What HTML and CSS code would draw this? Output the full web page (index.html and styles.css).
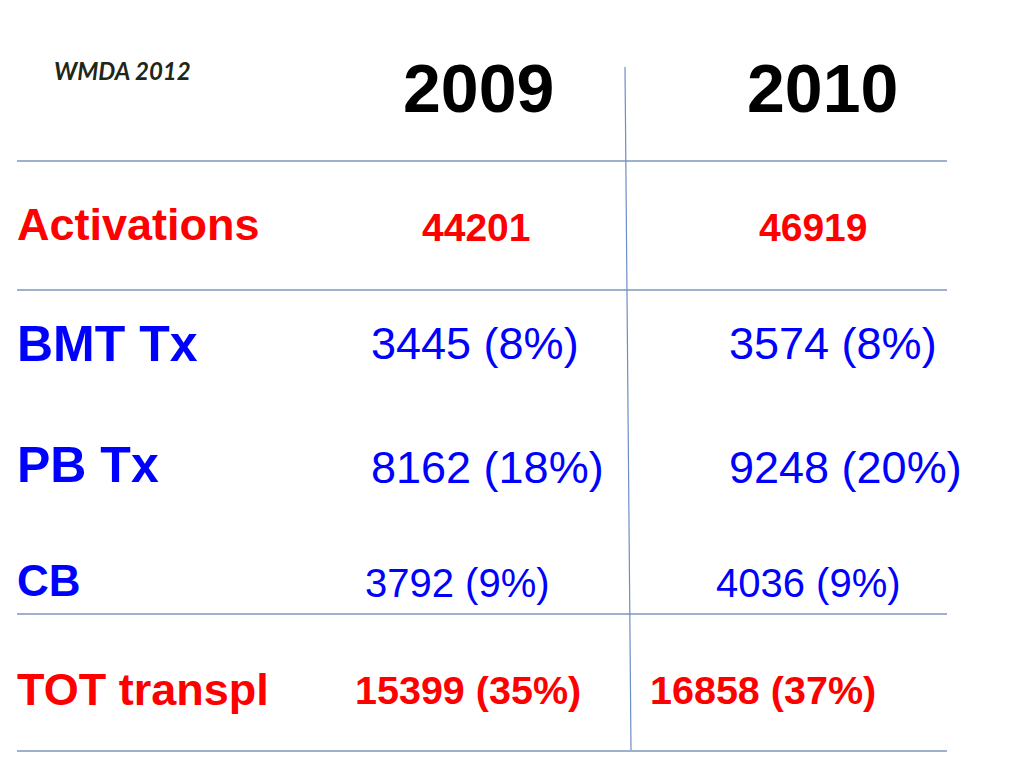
FILE: index.html
```html
<!DOCTYPE html>
<html lang="en">
<head>
<meta charset="utf-8">
<title>WMDA 2012</title>
<link rel="stylesheet" href="styles.css">
</head>
<body>
<div class="slide">
  <div class="table">
    <div class="row head">
      <div class="cell wmda">WMDA 2012</div>
      <div class="cell year y2009">2009</div>
      <div class="cell year y2010">2010</div>
    </div>
    <div class="row act">
      <div class="cell label red lbl-act">Activations</div>
      <div class="cell num-act red a1">44201</div>
      <div class="cell num-act red a2">46919</div>
    </div>
    <div class="block mid">
      <div class="row sub bmt">
        <div class="cell label blue lbl-big">BMT Tx</div>
        <div class="cell val blue v1">3445 (8%)</div>
        <div class="cell val blue v2">3574 (8%)</div>
      </div>
      <div class="row sub pb">
        <div class="cell label blue lbl-big pbl">PB Tx</div>
        <div class="cell val blue v1 pbv">8162 (18%)</div>
        <div class="cell val blue v2 pbv">9248 (20%)</div>
      </div>
      <div class="row sub cb">
        <div class="cell label blue lbl-cb">CB</div>
        <div class="cell val-sm blue c1">3792 (9%)</div>
        <div class="cell val-sm blue c2">4036 (9%)</div>
      </div>
    </div>
    <div class="row tot">
      <div class="cell label red lbl-tot">TOT transpl</div>
      <div class="cell num-tot red t1">15399 (35%)</div>
      <div class="cell num-tot red t2">16858 (37%)</div>
    </div>
  </div>
  <svg class="vline" width="1024" height="768" viewBox="0 0 1024 768" aria-hidden="true">
    <line x1="625" y1="67" x2="631" y2="750" stroke="#6d8ec6" stroke-width="1.2"/>
  </svg>
</div>
</body>
</html>
```

FILE: styles.css
```css
* { box-sizing: border-box; }
html, body { margin: 0; padding: 0; background: #ffffff; }
body { font-family: "Liberation Sans", Arial, sans-serif; }

.slide {
  position: relative;
  width: 1024px;
  height: 768px;
  background: #ffffff;
  overflow: hidden;
}

.table {
  margin-left: 17px;
  width: 930px;
}

.row {
  display: grid;
  grid-template-columns: 335px 276px 319px;
}

.head { height: 162px; border-bottom: 2px solid #9db1cc; }
.act  { height: 129px; border-bottom: 2px solid #9db1cc; }
.mid  { height: 324px; border-bottom: 2px solid #9db1cc; }
.tot  { height: 137px; border-bottom: 2px solid #9db1cc; }

.sub.bmt { height: 120px; }
.sub.pb  { height: 120px; }
.sub.cb  { height: 82px; }

.cell { line-height: 1; white-space: nowrap; }

.red { color: #ff0000; }
.blue { color: #0000ff; }

/* header */
.wmda {
  font-family: Lato, "Open Sans", sans-serif;
  font-weight: 700;
  font-style: italic;
  font-size: 24px;
  color: #1f2719;
  padding: 59px 0 0 37px;
}
.year { font-size: 68px; font-weight: 700; color: #000; padding-top: 54px; }
.y2009 { padding-left: 51px; }
.y2010 { padding-left: 119px; }

/* labels */
.label { font-weight: 700; }
.lbl-act { font-size: 45px; padding-top: 40px; }
.lbl-big { font-size: 50px; padding-top: 28px; }
.pbl { padding-top: 29px; }
.lbl-cb { font-size: 44px; padding-top: 28px; }
.lbl-tot { font-size: 45px; padding-top: 52px; }

/* activations */
.num-act { font-size: 39px; font-weight: 700; padding-top: 46px; }
.a1 { padding-left: 70px; }
.a2 { padding-left: 131px; }

/* blue values */
.val { font-size: 45px; padding-top: 30px; }
.pbv { padding-top: 34px; }
.v1 { padding-left: 19px; }
.v2 { padding-left: 101px; }
.val-sm { font-size: 40px; padding-top: 32px; }
.c1 { padding-left: 13px; }
.c2 { padding-left: 88px; }

/* totals */
.num-tot { font-size: 39.5px; font-weight: 700; padding-top: 56px; }
.t1 { padding-left: 3px; }
.t2 { padding-left: 22px; }

.vline {
  position: absolute;
  left: 0;
  top: 0;
  pointer-events: none;
}
```
